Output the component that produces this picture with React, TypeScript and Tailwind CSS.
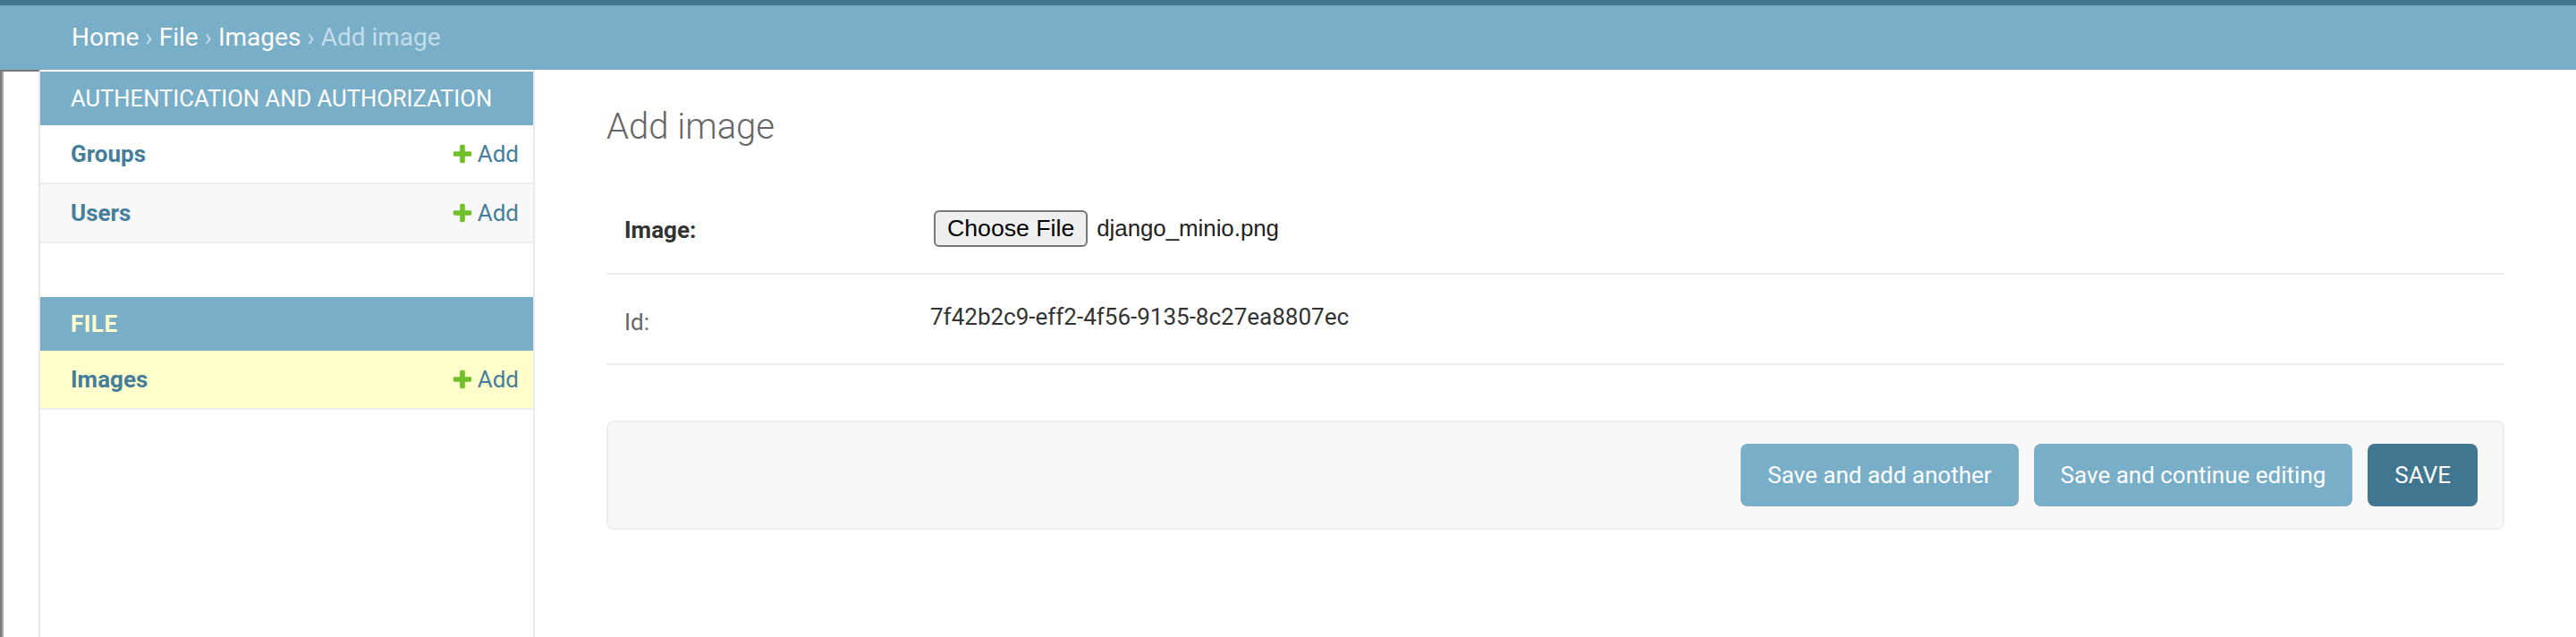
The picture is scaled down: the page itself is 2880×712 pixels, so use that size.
import React from "react";

function AddIcon() {
  return (
    <svg width="26" height="26" viewBox="0 0 1792 1792" className="shrink-0">
      <path
        fill="#70bf2b"
        d="M1600 796v192q0 40-28 68t-68 28h-416v416q0 40-28 68t-68 28h-192q-40 0-68-28t-28-68v-416h-416q-40 0-68-28t-28-68v-192q0-40 28-68t68-28h416v-416q0-40 28-68t68-28h192q40 0 68 28t28 68v416h416q40 0 68 28t28 68z"
      />
    </svg>
  );
}

function ModelRow({ name, current, even }: { name: string; current?: boolean; even?: boolean }) {
  return (
    <div
      className={
        "h-[66px] border-b-2 border-[#eeeeee] pl-[34px] pr-[16px] flex items-center justify-between " +
        (current ? "bg-[#ffffcc]" : even ? "bg-[#f8f8f8]" : "bg-white")
      }
    >
      <span className="text-[26px] font-bold text-[#447e9b] leading-[32px]">{name}</span>
      <span className="flex items-center gap-[4px] text-[26px] text-[#447e9b] leading-[32px]">
        <AddIcon />
        <span>Add</span>
      </span>
    </div>
  );
}

export default function App() {
  return (
    <div className="w-[2880px] h-[712px] overflow-hidden bg-white font-['Roboto','Lucida_Grande','DejaVu_Sans',sans-serif] text-[#333333]">
      <div className="h-[6px] bg-[#417690]" />
      <div className="h-[72px] bg-[#79aec8] px-[80px] py-[20px] text-[28px] leading-[32px] text-[#c4dce8] whitespace-nowrap">
        <span className="text-white">Home</span> › <span className="text-white">File</span> ›{" "}
        <span className="text-white">Images</span> › Add image
      </div>
      <div className="flex h-[634px]">
        <div className="w-[45px] shrink-0 border-t-2 border-l-2 border-r-2 border-t-[#777777] border-l-[#7a7a7a] border-r-[#e6e6e6] bg-white">
          <div className="h-full w-[2px] bg-[#a8a8a8]" />
        </div>
        <div className="w-[553px] shrink-0 border-r-2 border-[#eaeaea] pt-[2px] bg-white">
          <div className="h-[60px] bg-[#79aec8] pl-[34px] flex items-center text-[25.6px] text-white uppercase whitespace-nowrap">
            Authentication and Authorization
          </div>
          <ModelRow name="Groups" />
          <ModelRow name="Users" even />
          <div className="mt-[60px] h-[60px] bg-[#79aec8] pl-[34px] flex items-center text-[26px] tracking-[0.5px] font-bold text-[#ffffcc] uppercase">
            File
          </div>
          <ModelRow name="Images" current />
        </div>
        <div className="flex-1 px-[80px] pt-[40px]">
          <h1 className="text-[40px] leading-[47px] font-light text-[#666666] mb-[40px]">Add image</h1>
          <div className="h-[102px] border-b-2 border-[#eeeeee] px-[20px] flex items-center">
            <div className="w-[342px] pt-[4px] text-[26px] font-bold text-[#333333] leading-[30px]">Image:</div>
            <div className="ml-[4px] flex items-center font-['Liberation_Sans',Arial,sans-serif] text-[26.67px]">
              <span className="h-[41px] px-[13px] border-2 border-[#767676] rounded-[6px] bg-[#efefef] text-black flex items-center leading-none">
                Choose File
              </span>
              <span className="ml-[10px] text-[25.8px] text-[#222222]">django_minio.png</span>
            </div>
          </div>
          <div className="h-[101px] border-b-2 border-[#eeeeee] px-[20px] flex items-center">
            <div className="w-[342px] pt-[6px] text-[26px] text-[#666666] leading-[30px]">Id:</div>
            <div className="pb-[6px] text-[26px] text-[#333333] leading-[30px]">7f42b2c9-eff2-4f56-9135-8c27ea8807ec</div>
          </div>
          <div className="mt-[62px] h-[122px] border-2 border-[#eeeeee] rounded-[8px] bg-[#f8f8f8] px-[28px] pt-[24px] flex justify-end gap-[17px]">
            <div className="h-[70px] px-[30px] rounded-[8px] bg-[#79aec8] text-white text-[26px] flex items-center">
              Save and add another
            </div>
            <div className="h-[70px] px-[30px] rounded-[8px] bg-[#79aec8] text-white text-[26px] flex items-center">
              Save and continue editing
            </div>
            <div className="h-[70px] px-[30px] rounded-[8px] bg-[#417690] text-white text-[26px] flex items-center uppercase">
              Save
            </div>
          </div>
        </div>
      </div>
    </div>
  );
}
